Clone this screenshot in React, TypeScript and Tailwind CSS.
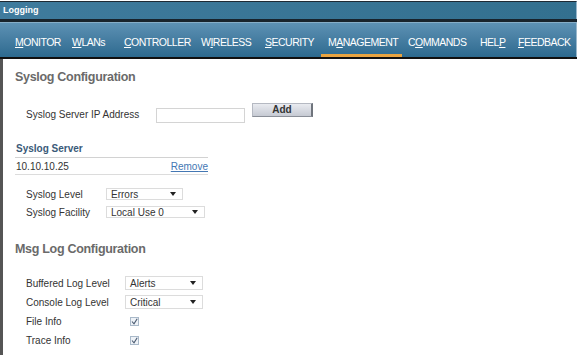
import React from 'react';

const navItems = [
  { pre: '', key: 'M', post: 'ONITOR', w: 'w-[57px]' },
  { pre: '', key: 'W', post: 'LANs', w: 'w-[52px]' },
  { pre: '', key: 'C', post: 'ONTROLLER', w: 'w-[77px]' },
  { pre: 'W', key: 'I', post: 'RELESS', w: 'w-[64px]' },
  { pre: '', key: 'S', post: 'ECURITY', w: 'w-[63px]' },
  { pre: 'M', key: 'A', post: 'NAGEMENT', w: 'w-[87px]', active: true },
  { pre: 'C', key: 'O', post: 'MMANDS', w: 'w-[72px]' },
  { pre: 'HEL', key: 'P', post: '', w: 'w-[38px]' },
  { pre: '', key: 'F', post: 'EEDBACK', w: 'w-[55px]' },
];

const Arrow = () => (
  <svg width="6" height="4" viewBox="0 0 6 4" className="mr-[6px]">
    <path d="M0 0 L6 0 L3 4 Z" fill="#222" />
  </svg>
);

const Select = ({ value, w, h }: { value: string; w: string; h: string }) => (
  <div className={`${w} ${h} flex items-center justify-between border border-[#dcdcdc] bg-white pl-[4px] text-[10px] text-[#333]`}>
    <span>{value}</span>
    <Arrow />
  </div>
);

const Check = () => (
  <div className="w-[9px] h-[9px] border border-[#a9b9c9] bg-[#eef2f7] flex items-center justify-center">
    <svg width="7" height="7" viewBox="0 0 7 7">
      <path d="M1 3.5 L3 5.8 L6.2 0.8" stroke="#4a5a70" strokeWidth="1.1" fill="none" />
    </svg>
  </div>
);

export default function App() {
  return (
    <div className="w-[577px] h-[355px] bg-white overflow-hidden flex flex-col font-['Liberation_Sans',Arial,sans-serif]">
      {/* title bar */}
      <div className="h-[1px] w-full bg-white" />
      <div className="h-[18px] border-t border-[#1e2a34] bg-gradient-to-r from-[#3f7b9d] to-[#33708f] flex items-center pl-[3px] border-r border-r-[#9ab8cc]">
        <span className="text-[9px] font-bold text-white leading-none">Logging</span>
      </div>
      <div className="h-[3px] bg-[#18232c]" />

      {/* nav */}
      <div className="h-[35px] border-t border-[#86aec8] bg-gradient-to-b from-[#5d91b4] to-[#2d6a8f] flex items-end pl-[15px] border-r border-r-[#9ab8cc]">
        {navItems.map((n) => (
          <div key={n.key + n.post} className={`${n.w} h-[34px] flex shrink-0 ${n.active ? '-ml-[7px]' : ''}`}>
            <div
              className={`h-full flex items-center border-b-[3px] ${n.active ? 'w-[81px] pl-[7px] border-[#e9a441]' : 'border-transparent'}`}
            >
              <span className="text-[10.5px] text-white tracking-[-0.5px] leading-none mt-[7px] whitespace-nowrap">
                {n.pre}
                <span className="underline underline-offset-1">{n.key}</span>
                {n.post}
              </span>
            </div>
          </div>
        ))}
      </div>
      <div className="h-[2px] bg-[#111]" />

      {/* content */}
      <div className="flex-1 border-l-[3px] border-[#555] pl-[12px] flex flex-col">
        <div className="mt-[11px] h-[14px] leading-[14px] text-[12.5px] font-bold text-[#6a6a6a] tracking-[-0.3px]">
          Syslog Configuration
        </div>

        <div className="mt-[19px] h-[20px] flex items-start">
          <span className="ml-[11px] mt-[7px] w-[130px] text-[10px] leading-[10px] text-[#333]">Syslog Server IP Address</span>
          <div className="mt-[5px] w-[89px] h-[15px] border border-[#d4d4d4] bg-white" />
          <button className="ml-[7px] w-[61px] h-[14px] flex items-center justify-center bg-gradient-to-b from-[#e9ebf0] to-[#c6cad3] border border-[#b5b9c2] border-r-[2px] border-r-[#6f747c] border-b-[#8a8f98] text-[10px] font-bold text-[#333] leading-none">
            Add
          </button>
        </div>

        <div className="mt-[21px] w-[193px] flex flex-col">
          <div className="h-[14px] border-b border-[#d2d2d2] text-[10px] font-bold text-[#3a5a78] leading-[10px] pl-[1px]">
            Syslog Server
          </div>
          <div className="h-[17px] border-b border-[#dcdcdc] flex items-center justify-between text-[10px] text-[#333] pl-[1px]">
            <span>10.10.10.25</span>
            <span className="text-[#4477b3] underline">Remove</span>
          </div>
        </div>

        <div className="mt-[13px] flex items-center h-[12px]">
          <span className="ml-[11px] w-[80px] text-[10px] text-[#333]">Syslog Level</span>
          <Select value="Errors" w="w-[77px]" h="h-[12px]" />
        </div>
        <div className="mt-[6px] flex items-center h-[12px]">
          <span className="ml-[11px] w-[80px] text-[10px] text-[#333]">Syslog Facility</span>
          <Select value="Local Use 0" w="w-[99px]" h="h-[12px]" />
        </div>

        <div className="mt-[24px] h-[14px] leading-[14px] text-[12.5px] font-bold text-[#6a6a6a] tracking-[-0.3px]">
          Msg Log Configuration
        </div>

        <div className="mt-[20px] flex items-center h-[14px]">
          <span className="ml-[11px] w-[99px] text-[10px] text-[#333]">Buffered Log Level</span>
          <Select value="Alerts" w="w-[78px]" h="h-[14px]" />
        </div>
        <div className="mt-[5px] flex items-center h-[14px]">
          <span className="ml-[11px] w-[99px] text-[10px] text-[#333]">Console Log Level</span>
          <Select value="Critical" w="w-[78px]" h="h-[14px]" />
        </div>
        <div className="mt-[6px] flex items-center h-[12px]">
          <span className="ml-[11px] w-[104px] text-[10px] text-[#333]">File Info</span>
          <Check />
        </div>
        <div className="mt-[7px] flex items-center h-[12px]">
          <span className="ml-[11px] w-[104px] text-[10px] text-[#333]">Trace Info</span>
          <Check />
        </div>
      </div>
    </div>
  );
}
